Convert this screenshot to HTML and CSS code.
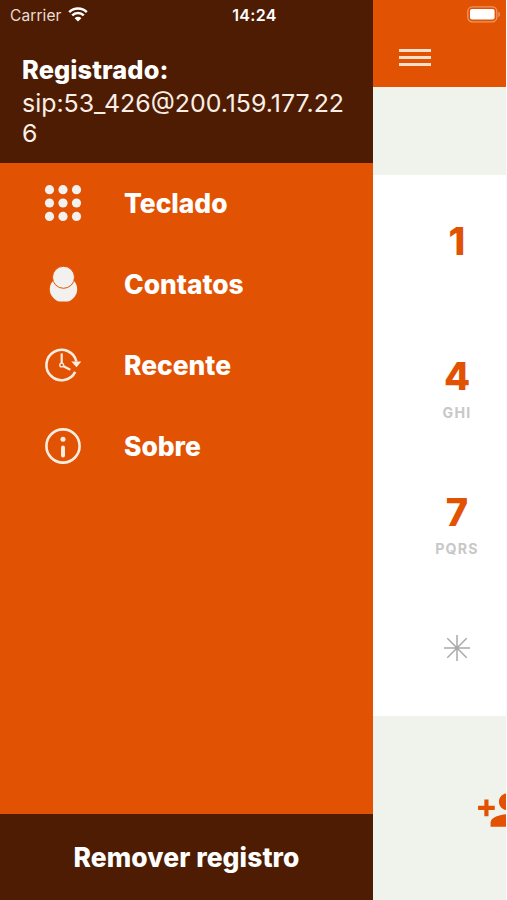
FILE: index.html
```html
<!DOCTYPE html>
<html lang="pt-BR">
<head>
  <meta charset="UTF-8" />
  <meta name="viewport" content="width=device-width, initial-scale=1" />
  <title>Teclado</title>
  <link rel="stylesheet" href="styles.css">
</head>
<body>

  <!-- Status bar -->
  <div class="status-bar">
    <div class="network">
      <span class="carrier">Carrier</span>
      <svg width="20" height="15" viewBox="0 0 20 15">
        <path d="M1.200 5.200a12.600 12.600 0 0 1 17.600 0M4.200 8.300a8.300 8.300 0 0 1 11.600 0" fill="none" stroke="#fff" stroke-width="2.500"/>
        <path d="M10 14.600L6.600 11.200a4.800 4.800 0 0 1 6.800 0z" fill="#fff"/>
      </svg>
    </div>
    <span class="time">14:24</span>
    <svg class="battery" width="34" height="17" viewBox="0 0 34 17">
      <rect x="0.8" y="0.8" width="29" height="15" rx="4.5" fill="none" stroke="#fff" stroke-opacity="0.4" stroke-width="1.3"/>
      <rect x="3" y="3" width="24.6" height="10.6" rx="2" fill="#fff"/>
      <path d="M31.300 5.500c2.200 1 2.200 4.800 0 5.800z" fill="#fff" fill-opacity="0.4"/>
    </svg>
  </div>

  <!-- Side menu -->
  <aside class="drawer">
    <div class="account">
      <div class="account-title">Registrado:</div>
      <div class="account-uri">sip:53_426@200.159.177.226</div>
    </div>
    <ul class="menu">
      <li>
        <svg width="38" height="38" viewBox="0 0 38 38" fill="#f3f1ef">
          <circle cx="5.5" cy="5.7" r="4.6"/><circle cx="19" cy="5.7" r="4.6"/><circle cx="32.5" cy="5.7" r="4.6"/>
          <circle cx="5.5" cy="19" r="4.6"/><circle cx="19" cy="19" r="4.6"/><circle cx="32.5" cy="19" r="4.6"/>
          <circle cx="5.5" cy="32.4" r="4.6"/><circle cx="19" cy="32.4" r="4.6"/><circle cx="32.5" cy="32.4" r="4.6"/>
        </svg>
        <span>Teclado</span>
      </li>
      <li>
        <svg width="38" height="38" viewBox="0 0 38 38">
          <path d="M10.500 14.500C4.500 19 4.500 28 9 32.500c2.500 2.600 4.500 4 6.500 4h8c2 0 4-1.400 6.500-4C34.500 28 34.500 19 28.500 14.500z" fill="#f3f1ef"/>
          <circle cx="19.500" cy="12.300" r="11" fill="#f3f1ef" stroke="#e25203" stroke-width="1"/>
        </svg>
        <span>Contatos</span>
      </li>
      <li>
        <svg width="38" height="38" viewBox="0 0 38 38" fill="none" stroke="#fbece0" stroke-width="2.2">
          <path d="M32.400 15.500A15.200 15.200 0 1 0 31.200 25.800" stroke-width="2.600"/>
          <path d="M27.300 15.500h10L32.500 21.300z" fill="#fbece0" stroke="none"/>
          <path d="M17.700 7.500V17.300M19.500 20.200l6.800 3.600"/>
          <circle cx="17.7" cy="19" r="1.9" stroke-width="1.4"/>
        </svg>
        <span>Recente</span>
      </li>
      <li>
        <svg width="38" height="38" viewBox="0 0 38 38">
          <circle cx="19" cy="19" r="16.6" fill="none" stroke="#fbece0" stroke-width="2.6"/>
          <circle cx="19" cy="12.2" r="2.5" fill="#fbece0"/>
          <path d="M19 20.500v8" stroke="#fbece0" stroke-width="4" stroke-linecap="round"/>
        </svg>
        <span>Sobre</span>
      </li>
    </ul>
    <button class="remove-btn">Remover registro</button>
  </aside>

  <!-- Dialer, pushed to the right by the menu -->
  <main class="dialer">
    <header class="top-bar">
      <div class="hamburger"><div></div><div></div><div></div></div>
    </header>
    <div class="number-display"></div>
    <div class="keypad">
      <div class="key"><b>1</b></div>
      <div class="key"><b>4</b><small>GHI</small></div>
      <div class="key"><b>7</b><small>PQRS</small></div>
      <div class="key key-star">
        <svg width="28" height="28" viewBox="0 0 28 28" stroke="#a9a9a9" stroke-width="1.5">
          <path d="M14 1v26M1 14h26M4.300 4.300l19.400 19.400M23.700 4.300L4.300 23.700"/>
        </svg>
      </div>
    </div>
    <div class="actions">
      <svg width="50" height="50" viewBox="0 0 24 24" fill="#e25203">
        <path d="M15 12c2.210 0 4-1.790 4-4s-1.790-4-4-4-4 1.790-4 4 1.790 4 4 4zm-9-2V7H4v3H1v2h3v3h2v-3h3v-2H6zm9 4c-2.670 0-8 1.340-8 4v2h16v-2c0-2.660-5.330-4-8-4z"/>
      </svg>
    </div>
  </main>

</body>
</html>
```
FILE: styles.css
```css
* { box-sizing: border-box; margin: 0; padding: 0; font-family: Inter, "Liberation Sans", sans-serif; }
body { height: 100vh; background: #fff; display: flex; position: relative; overflow: hidden; }

/* ===== Status bar ===== */
.status-bar {
  position: absolute;
  top: 0;
  left: 0;
  width: 507px;
  height: 29px;
  padding: 0 6px 0 10px;
  display: grid;
  grid-template-columns: 1fr auto 1fr;
  align-items: center;
  color: #fff;
  font-size: 16px;
  z-index: 10;
}
.network { display: flex; align-items: center; gap: 6px; }
.carrier { color: #e9dcd4; font-size: 15.5px; letter-spacing: 0.1px; padding-top: 1px; }
.time { font-weight: 600; letter-spacing: 0.3px; margin-right: 2px; }
.battery { justify-self: end; }

/* ===== Side menu ===== */
.drawer { width: 373px; flex-shrink: 0; background: #e25203; color: #fff; display: flex; flex-direction: column; }
.account { height: 163px; flex-shrink: 0; background: #4d1c02; padding: 54px 22px 0; }
.account-title { font-size: 25.4px; font-weight: 800; line-height: 32px; letter-spacing: 0.1px; }
.account-uri { margin-top: 2px; font-size: 24.9px; line-height: 30px; color: #fbeee6; word-break: break-all; }
.menu { flex: 1; list-style: none; margin-top: -1px; }
.menu li { height: 81px; padding-left: 44px; display: flex; align-items: center; gap: 42px; font-size: 26.4px; font-weight: 800; }
.remove-btn { height: 86px; padding-bottom: 1px; border: none; background: #4d1c02; color: #fff; font-size: 26.4px; font-weight: 800; letter-spacing: 0.1px; }

/* ===== Dialer ===== */
.dialer { width: 133px; background: #fff; display: flex; flex-direction: column; overflow: hidden; }
.top-bar { height: 87px; background: #e25203; padding: 49px 0 0 26px; }
.hamburger { display: flex; flex-direction: column; gap: 4px; }
.hamburger div { width: 32px; height: 3px; background: #ffdfca; }
.number-display { height: 88px; background: #eff3eb; }
.keypad { height: 541px; padding-left: 16px; display: grid; grid-template-rows: repeat(4, 1fr); }
.key { width: 136px; padding-top: 43px; display: flex; flex-direction: column; align-items: center; }
.key-star { padding-top: 0; justify-content: center; }
.key b { font-size: 38px; font-weight: 800; line-height: 47px; color: #e25203; }
.key small { font-size: 14.2px; font-weight: 700; line-height: 26px; letter-spacing: 1.2px; color: #c8c8c8; }
.actions { flex: 1; background: #eff3eb; padding: 69px 0 0 103px; }
```
